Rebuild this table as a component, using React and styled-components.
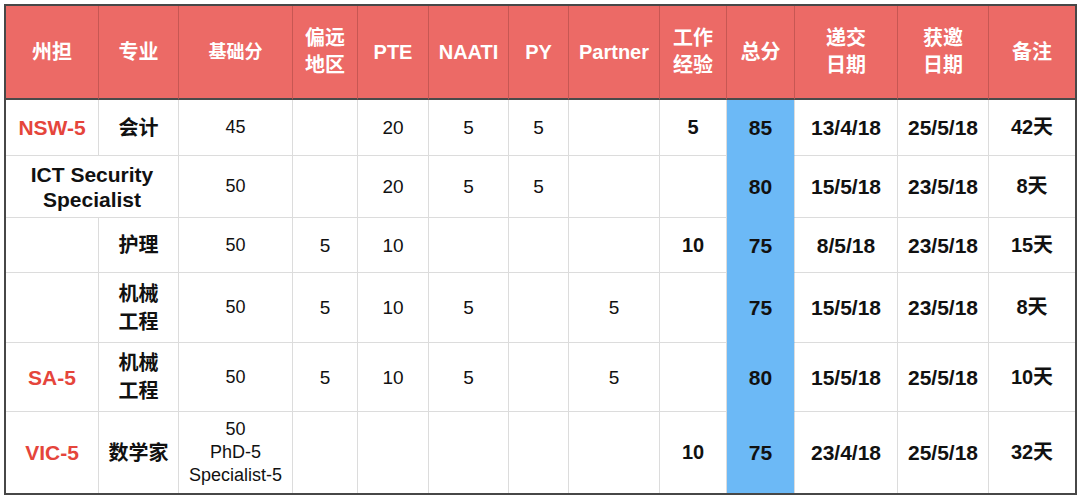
import React from "react";
import styled, { createGlobalStyle } from "styled-components";

const GlobalStyle = createGlobalStyle`
  html, body {
    margin: 0;
    background: #fff;
  }
  body {
    font-family: "Liberation Sans", "Noto Sans CJK SC", sans-serif;
    color: #111;
  }
`;

const widths = [93, 80, 114, 65, 71, 80, 60, 91, 67, 68, 103, 91, 86];

const headers = [
  { lines: ["州担"] },
  { lines: ["专业"] },
  { lines: ["基础分"], size: 18 },
  { lines: ["偏远", "地区"] },
  { lines: ["PTE"] },
  { lines: ["NAATI"] },
  { lines: ["PY"] },
  { lines: ["Partner"] },
  { lines: ["工作", "经验"] },
  { lines: ["总分"] },
  { lines: ["递交", "日期"] },
  { lines: ["获邀", "日期"] },
  { lines: ["备注"] },
];

// vals: remote, pte, naati, py, partner, work
const rows = [
  { h: 56, state: "NSW-5", major: ["会计"], base: ["45"], vals: ["", "20", "5", "5", "", "5"], total: "85", submit: "13/4/18", invite: "25/5/18", note: "42天" },
  { h: 62, merged: ["ICT Security", "Specialist"], base: ["50"], vals: ["", "20", "5", "5", "", ""], total: "80", submit: "15/5/18", invite: "23/5/18", note: "8天" },
  { h: 55, state: "", major: ["护理"], base: ["50"], vals: ["5", "10", "", "", "", "10"], total: "75", submit: "8/5/18", invite: "23/5/18", note: "15天" },
  { h: 70, state: "", major: ["机械", "工程"], base: ["50"], vals: ["5", "10", "5", "", "5", ""], total: "75", submit: "15/5/18", invite: "23/5/18", note: "8天" },
  { h: 69, state: "SA-5", major: ["机械", "工程"], base: ["50"], vals: ["5", "10", "5", "", "5", ""], total: "80", submit: "15/5/18", invite: "25/5/18", note: "10天" },
  { h: 81, state: "VIC-5", major: ["数学家"], base: ["50", "PhD-5", "Specialist-5"], vals: ["", "", "", "", "", "10"], total: "75", submit: "23/4/18", invite: "25/5/18", note: "32天" },
];

const Lines = ({ lines }) =>
  lines.map((l, i) => (
    <React.Fragment key={i}>
      {i > 0 && <br />}
      {l}
    </React.Fragment>
  ));

const App = () => (
  <Page>
    <GlobalStyle />
    <Table>
      <colgroup>
        {widths.map((w, i) => (
          <col key={i} style={{ width: w }} />
        ))}
      </colgroup>
      <thead>
        <HeadRow>
          {headers.map((hd, i) => (
            <Th key={i} $size={hd.size} $last={i === headers.length - 1}>
              <Lines lines={hd.lines} />
            </Th>
          ))}
        </HeadRow>
      </thead>
      <tbody>
        {rows.map((r, ri) => {
          const last = ri === rows.length - 1;
          return (
            <tr key={ri} style={{ height: r.h }}>
              {r.merged ? (
                <Td colSpan={2} $bold $size={21} $lastRow={last}>
                  <Lines lines={r.merged} />
                </Td>
              ) : (
                <>
                  <Td $bold $red $size={21} $lastRow={last}>
                    {r.state}
                  </Td>
                  <Td $bold $size={20} $tight $lastRow={last}>
                    <Lines lines={r.major} />
                  </Td>
                </>
              )}
              <Td $size={18} $small={r.base.length > 1} $lastRow={last}>
                <Lines lines={r.base} />
              </Td>
              {r.vals.map((v, i) => (
                <Td key={i} $size={i === 5 ? 20 : 19} $bold={i === 5} $lastRow={last}>
                  {v}
                </Td>
              ))}
              <Td $blue $bold $size={21} $lastRow={last}>
                {r.total}
              </Td>
              <Td $bold $size={21} $lastRow={last}>
                {r.submit}
              </Td>
              <Td $bold $size={21} $lastRow={last}>
                {r.invite}
              </Td>
              <Td $bold $size={20} $last $lastRow={last}>
                {r.note}
              </Td>
            </tr>
          );
        })}
      </tbody>
    </Table>
  </Page>
);

export default App;

const Page = styled.div`
  padding: 4px 0 0 4px;
  width: 1080px;
  height: 497px;
  box-sizing: border-box;
`;

const Table = styled.table`
  width: 1071px;
  table-layout: fixed;
  border-collapse: separate;
  border-spacing: 0;
  border: 2px solid #474747;
`;

const HeadRow = styled.tr`
  height: 94px;
`;

const Th = styled.th`
  background: #ec6a66;
  color: #fff;
  font-weight: 700;
  font-size: ${(p) => p.$size || 20}px;
  line-height: 27px;
  text-align: center;
  vertical-align: middle;
  padding: 0;
  border-right: ${(p) => (p.$last ? "none" : "1px solid #c75753")};
  border-bottom: 2px solid #4a4a4a;
`;

const Td = styled.td`
  font-size: ${(p) => p.$size || 19}px;
  font-weight: ${(p) => (p.$bold ? 700 : 400)};
  color: ${(p) => (p.$red ? "#e5453b" : "#111")};
  background: ${(p) => (p.$blue ? "#6cb9f6" : "#fff")};
  line-height: ${(p) => (p.$small ? 23 : p.$tight ? 28 : 25)}px;
  text-align: center;
  vertical-align: middle;
  padding: 0;
  border-right: ${(p) => (p.$last ? "none" : "1px solid #dcdcdc")};
  border-bottom: ${(p) =>
    p.$lastRow ? "none" : p.$blue ? "1px solid #6cb9f6" : "1px solid #dcdcdc"};
`;
